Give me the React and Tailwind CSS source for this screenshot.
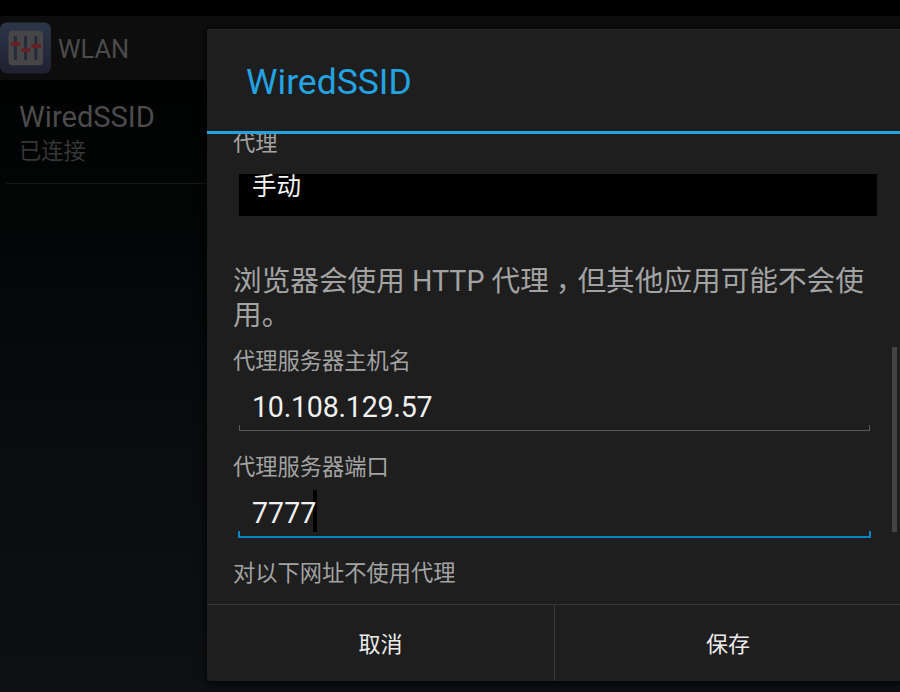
const FONT = "font-['Roboto','Noto_Sans_CJK_SC',sans-serif]";

function SlidersIcon() {
  return (
    <svg width="51" height="52" viewBox="0 0 51 52" className="shrink-0">
      <defs>
        <linearGradient id="tile" x1="0" y1="0" x2="0" y2="1">
          <stop offset="0" stopColor="#2b3648" />
          <stop offset="1" stopColor="#212030" />
        </linearGradient>
      </defs>
      <rect x="0" y="0.5" width="51" height="51" rx="7" fill="url(#tile)" />
      <rect x="8.5" y="8.8" width="34.5" height="34.5" rx="4" fill="#464548" />
      <g fill="#272c3a">
        <rect x="13.8" y="14" width="3" height="24" />
        <rect x="24" y="14" width="3" height="24" />
        <rect x="34.3" y="14" width="3" height="24" />
      </g>
      <g fill="#662125">
        <rect x="11" y="20" width="9" height="4" />
        <rect x="21.3" y="26.2" width="9" height="4" />
        <rect x="31.5" y="22" width="9.5" height="4" />
      </g>
    </svg>
  );
}

function Label({ children }) {
  return <div className="h-8 text-[22.25px] leading-8 text-[#a3a3a3]">{children}</div>;
}

export default function App() {
  return (
    <div className={`relative h-[692px] w-[900px] overflow-hidden bg-black ${FONT}`}>
      <div className="flex h-full flex-col pt-4">
        <header className="flex h-16 items-center gap-[7px] bg-[#0d0d0d]">
          <SlidersIcon />
          <span className="pt-0.5 text-[25.4px] text-[#4b4b4b]">WLAN</span>
        </header>
        <main className="flex-1 bg-linear-to-b from-[#010202] via-[#090a0b] to-[#0f1012] pl-1.5">
          <div className="h-[104px] border-b border-[#161717] pt-5 pl-[13px]">
            <div className="h-9 text-[29.1px] leading-[35px] text-[#4b4b4b]">WiredSSID</div>
            <div className="h-8 text-[22.25px] leading-[31px] text-[#353636]">已连接</div>
          </div>
        </main>
      </div>

      <section className="absolute top-[29px] left-[207px] flex h-[652px] w-[693px] flex-col rounded-l-[3px] border-t border-[#282828] bg-[#1e1e1e] shadow-[0_2px_7px_2px_rgba(0,0,0,0.65)]">
        <h1 className="flex h-[104px] shrink-0 items-center border-b-3 border-[#24a3e2] pt-1 pl-[39px] text-[35.5px] text-[#24a3e2]">
          WiredSSID
        </h1>
        <div className="flex h-[470px] shrink-0 overflow-hidden">
          <div className="-mt-[7px] w-[644px] pl-[26px]">
            <Label>代理</Label>
            <div className="mt-[15px] ml-1.5 h-[42px] w-[638px] bg-black pl-[13px] text-[24.5px] leading-[26px] text-[#f4f4f4]">
              手动
            </div>
            <p className="mt-12 w-[660px] text-[28.65px] leading-[34px] text-[#a3a3a3]">
              浏览器会使用 HTTP 代理<span className="pl-[7px] tracking-[-7px]">，</span>但其他应用可能不会使<br />用。
            </p>
            <div className="mt-[13px]">
              <Label>代理服务器主机名</Label>
            </div>
            <div className="mt-[9px] ml-1.5 flex h-[44px] w-[631px] flex-col">
              <div className="h-[39px] pl-[13px] text-[28.6px] leading-[43px] tracking-[-0.23px] text-[#f0f0f0]">10.108.129.57</div>
              <div className="h-1.5 shrink-0 border-x border-b border-[#5a5a5a]" />
            </div>
            <div className="mt-[21px]">
              <Label>代理服务器端口</Label>
            </div>
            <div className="mt-[7px] ml-[5px] flex w-[633px] flex-col">
              <div className="flex h-[41px] pl-3.5">
                <span className="z-10 text-[28.6px] leading-[46px] text-[#f0f0f0]">7777</span>
                <span className="-ml-[3px] h-[42px] w-1 bg-black" />
              </div>
              <div className="h-[7px] shrink-0 border-x-2 border-b-2 border-[#0086c4]" />
            </div>
            <div className="mt-[19px]">
              <Label>对以下网址不使用代理</Label>
            </div>
          </div>
          <div className="mt-[213px] ml-[41px] h-[185px] w-[5px] shrink-0 bg-[#444]" />
        </div>
        <footer className="flex flex-1 border-t border-[#373737] text-[22px] text-[#ececec]">
          <button className="w-[348px] border-r border-[#373737] pt-0.5">取消</button>
          <button className="flex-1 pt-0.5 pl-px">保存</button>
        </footer>
      </section>
    </div>
  );
}
